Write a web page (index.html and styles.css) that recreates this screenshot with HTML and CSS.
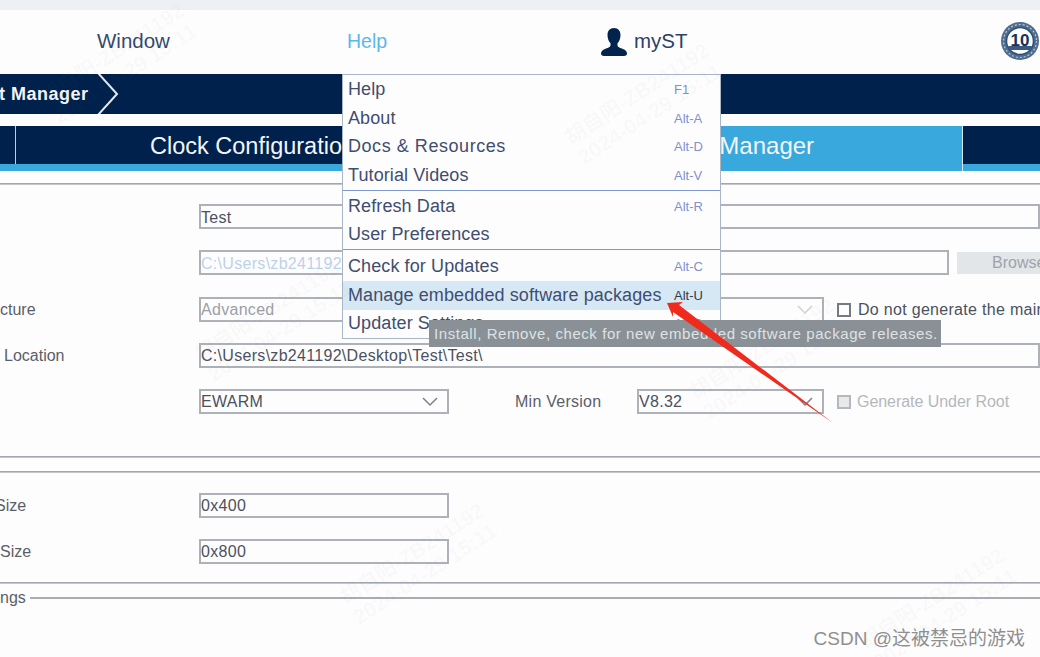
FILE: index.html
```html
<!DOCTYPE html>
<html lang="en">
<head>
<meta charset="utf-8">
<title>STM32CubeMX</title>
<link rel="stylesheet" href="styles.css">
</head>
<body>
<div class="page">
  <div class="top-strip"></div>
  <header class="menubar">
    <span class="menu-window">Window</span>
    <span class="menu-help">Help</span>
    <span class="menu-myst">
      <svg class="user-icon" viewBox="0 0 28 28" width="28" height="28"><path d="M14 0c4.300 0 6.500 3 6.500 7 0 3.500-1.200 6.500-3 8.300v2.200c0 1.600 3 2.400 6 3.700 2.400 1 3.500 2.600 3.500 4.300 0 1.300-1 2.500-3 2.500H4c-2 0-3-1.200-3-2.500 0-1.700 1.100-3.300 3.500-4.300 3-1.300 6-2.100 6-3.700v-2.200c-1.800-1.800-3-4.800-3-8.300 0-4 2.200-7 6.500-7z" fill="#03234f"/></svg>
      <span>myST</span>
    </span>
    <svg class="badge" viewBox="0 0 40 40" width="40" height="40">
      <circle cx="20" cy="20" r="19" fill="#4f6d8f"/>
      <circle cx="20" cy="20" r="16.500" fill="none" stroke="#b9c6d4" stroke-width="1.200" stroke-dasharray="2 2"/>
      <circle cx="20" cy="20" r="13.500" fill="#fdfdfe" stroke="#2f4f75" stroke-width="1.500"/>
      <text x="20" y="25" text-anchor="middle" class="badge-text">10</text>
      <path d="M8 25h24l-2 4H10z" fill="#3c5a7f"/>
    </svg>
  </header>
  <nav class="crumb">
    <span class="crumb-text">t Manager</span>
    <svg class="crumb-chevron" viewBox="0 0 24 40" width="24" height="40"><polyline points="1,-1 20,20 1,41" fill="none" stroke="#e6e9ee" stroke-width="2"/></svg>
  </nav>
  <div class="tabs">
    <div class="tab tab-stub"></div>
    <div class="tab tab-clock">Clock Configuration</div>
    <div class="tab tab-active">Project Manager</div>
    <div class="tab tab-rest"></div>
  </div>
  <div class="rule rule-first"></div>
  <main class="form">
    <div class="row row-a">
      <span class="label"></span>
      <div class="field field-full">Test</div>
    </div>
    <div class="row row-b">
      <span class="label"></span>
      <div class="field field-path muted-blue">C:\Users\zb241192\Desktop\Test</div>
      <div class="browse">Browse</div>
    </div>
    <div class="row row-c">
      <span class="label">cture</span>
      <div class="field field-wide muted">Advanced<svg class="chev chev-light" viewBox="0 0 16 10" width="16" height="10"><polyline points="1,1 8,8 15,1"/></svg></div>
      <span class="check"></span>
      <span class="check-text">Do not generate the main</span>
    </div>
    <div class="row row-d">
      <span class="label label-indent">Location</span>
      <div class="field field-full">C:\Users\zb241192\Desktop\Test\Test\</div>
    </div>
    <div class="row row-e">
      <span class="label"></span>
      <div class="field field-short">EWARM<svg class="chev" viewBox="0 0 16 10" width="16" height="10"><polyline points="1,1 8,8 15,1"/></svg></div>
      <span class="min-label">Min Version</span>
      <div class="field field-min">V8.32<svg class="chev" viewBox="0 0 16 10" width="16" height="10"><polyline points="1,1 8,8 15,1"/></svg></div>
      <span class="check check-off"></span>
      <span class="check-text check-text-off">Generate Under Root</span>
    </div>
    <div class="rule rule-g1"></div>
    <div class="rule rule-g2"></div>
    <div class="row row-f">
      <span class="label label-clip">Size</span>
      <div class="field field-short">0x400</div>
    </div>
    <div class="row row-g">
      <span class="label">Size</span>
      <div class="field field-short">0x800</div>
    </div>
    <div class="rule rule-g3"></div>
    <div class="legend"><span class="legend-text">ngs</span><span class="legend-line"></span></div>
  </main>

  <div class="dropdown">
    <ul class="menu-group">
      <li class="item"><span>Help</span><kbd>F1</kbd></li>
      <li class="item"><span>About</span><kbd>Alt-A</kbd></li>
      <li class="item"><span class="item-wide">Docs &amp; Resources</span><kbd>Alt-D</kbd></li>
      <li class="item"><span>Tutorial Videos</span><kbd>Alt-V</kbd></li>
    </ul>
    <ul class="menu-group">
      <li class="item"><span>Refresh Data</span><kbd>Alt-R</kbd></li>
      <li class="item"><span>User Preferences</span></li>
    </ul>
    <ul class="menu-group">
      <li class="item"><span>Check for Updates</span><kbd>Alt-C</kbd></li>
      <li class="item item-hover"><span>Manage embedded software packages</span><kbd>Alt-U</kbd></li>
      <li class="item"><span>Updater Settings</span><kbd>Alt-S</kbd></li>
    </ul>
  </div>
  <div class="tooltip">Install, Remove, check for new embedded software package releases.</div>

  <div class="wm wm-1">胡自阳-ZB241192<br>2024-04-29 15:11</div>
  <div class="wm wm-2">胡自阳-ZB241192<br>2024-04-29 15:11</div>
  <div class="wm wm-3">胡自阳-ZB241192<br>2024-04-29 15:11</div>
  <div class="wm wm-4">胡自阳-ZB241192<br>2024-04-29 15:11</div>
  <div class="wm wm-5">胡自阳-ZB241192<br>2024-04-29 15:11</div>
  <div class="wm wm-6">胡自阳-ZB241192<br>2024-04-29 15:11</div>

  <svg class="arrow" viewBox="0 0 1040 657" width="1040" height="657"><polygon points="667,303 683,302 679,305 833,423 673,312 673,317" fill="#f02a1c"/></svg>
  <div class="csdn">CSDN @这被禁忌的游戏</div>
</div>
</body>
</html>
```
FILE: styles.css
```css
* { box-sizing: border-box; }
html, body { margin: 0; padding: 0; }
body { background: #fefcfe; font-family: "Liberation Sans", Arial, "Noto Sans CJK SC", sans-serif; color: #4a525e; }
.page { position: relative; width: 1040px; height: 657px; overflow: hidden; background: #fefdfe; }
.top-strip { height: 10px; background: #edf1f5; }

.menubar { height: 64px; display: flex; align-items: center; font-size: 20.5px; color: #33496f; position: relative; }
.menu-window { margin-left: 97px; width: 250px; padding-bottom: 2px; }
.menu-help { width: 253px; color: #5cb8e8; padding-bottom: 2px; font-size: 19.5px; }
.menu-myst { display: flex; align-items: center; gap: 6px; color: #2c4168; width: 400px; }
.menu-myst span { padding-bottom: 2px; }
.user-icon { display: block; }
.badge { display: block; flex: none; margin-bottom: 2px; }
.badge-text { font: bold 17px "Liberation Sans", sans-serif; fill: #16315a; }

.crumb { height: 40px; background: #00214c; display: flex; align-items: center; }
.crumb-text { color: #f2f4f7; font-weight: bold; font-size: 18px; letter-spacing: 0.5px; margin-left: -1px; width: 98px; white-space: nowrap; }
.crumb-chevron { display: block; flex: none; }

.tabs { margin-top: 12px; height: 45px; display: flex; background: #38a8dd; font-size: 23.5px; color: #f4f6f8; }
.tab { height: 38px; display: flex; align-items: center; white-space: nowrap; background: #00214c; }
.tab-stub { width: 16px; border-right: 1px solid #c5ccd4; }
.tab-clock { width: 527px; padding-left: 134px; padding-top: 2px; }
.tab-active { width: 420px; height: 45px; background: #38a8dd; padding-left: 95px; padding-bottom: 5px; border-right: 1px solid #d9e6ef; font-size: 24px; }
.tab-rest { flex: 1; }

.rule { background: #a3a8ae; border-bottom: 1px solid #c4c8cc; height: 2px; }
.rule-first { margin-top: 12px; }
.form { padding-top: 19px; font-size: 16px; }
.row { display: flex; align-items: center; height: 25px; }
.row-b, .row-d, .row-e, .row-g { margin-top: 21px; }
.row-c { margin-top: 22px; }
.label { width: 199px; flex: none; color: #5a5f68; white-space: nowrap; }
.label-indent { padding-left: 4px; }
.label-clip { margin-left: -5px; width: 204px; }
.field { height: 25px; border: 2px solid #adb2b8; background: #fefdfe; display: flex; align-items: center; justify-content: space-between; padding: 0 9px 0 0; color: #4a5260; white-space: nowrap; overflow: hidden; flex: none; letter-spacing: 0.3px; }
.row-a .field, .row-b .field { padding-top: 2px; }
.field-full { width: 841px; }
.field-path { width: 750px; }
.field-wide { width: 625px; }
.field-short { width: 250px; }
.field-min { width: 187px; }
.muted { color: #9aa0a6; }
.muted-blue { color: #bcd2ea; }
.browse { width: 83px; height: 22px; margin-left: 8px; background: #e3e6e8; color: #9ea3a8; display: flex; align-items: center; padding-left: 35px; padding-top: 1px; white-space: nowrap; flex: none; }
.chev { display: block; flex: none; }
.chev polyline { fill: none; stroke: #7c828a; stroke-width: 1.5; }
.chev-light polyline { stroke: #cdd0d4; }
.check { width: 14px; height: 14px; margin-left: 13px; border: 2px solid #767b82; flex: none; }
.check-off { background: #e7e9eb; border-color: #b5b9be; }
.check-text { margin-left: 7px; white-space: nowrap; letter-spacing: 0.3px; color: #4a5260; }
.check-text-off { color: #b4b8bc; letter-spacing: -0.05px; margin-left: 6px; }
.min-label { width: 122px; margin-left: 66px; color: #5a5f68; flex: none; letter-spacing: 0.25px; }
.rule-g1 { margin-top: 42px; }
.rule-g2 { margin-top: 13px; }
.row-f { margin-top: 20px; }
.rule-g3 { margin-top: 18px; }
.legend { display: flex; align-items: center; height: 18px; margin-top: 5px; }
.legend-text { color: #5a5f68; width: 30px; }
.legend-line { flex: 1; height: 2px; background: #a9adb2; }

.dropdown { position: absolute; left: 342px; top: 74px; width: 379px; height: 265px; background: #fefdfe; border: 1px solid #a9b6c8; font-size: 18px; color: #3f4e70; letter-spacing: 0.1px; }
.menu-group { list-style: none; margin: 0; padding: 0; border-bottom: 1px solid #7f9ad0; }
.menu-group:nth-child(2) { padding-top: 1px; }
.menu-group:last-child { border-bottom: 0; padding-top: 2px; }
.item { height: 28.700px; display: flex; align-items: center; justify-content: space-between; padding: 0 16px 0 5px; white-space: nowrap; }
.item-wide { letter-spacing: 0.55px; }
.item kbd { font-family: "Liberation Sans", sans-serif; font-size: 13px; color: #7f90cc; width: 30px; letter-spacing: 0; }
.item-hover { background: #d7e8f5; }
.item-hover kbd { color: #2c3a50; }
.tooltip { position: absolute; left: 429px; top: 320px; width: 512px; height: 27px; background: #899197; color: #dfe2e4; font-size: 15px; letter-spacing: 0.57px; display: flex; align-items: center; padding-left: 5px; white-space: nowrap; }

.wm { position: absolute; font-size: 21px; line-height: 24px; color: rgba(110,110,120,0.04); font-weight: bold; transform: rotate(-33deg); white-space: nowrap; text-align: center; }
.wm-1 { left: 35px; top: 40px; }
.wm-2 { left: 560px; top: 80px; }
.wm-3 { left: 190px; top: 297px; }
.wm-4 { left: 685px; top: 335px; }
.wm-5 { left: 335px; top: 540px; }
.wm-6 { left: 855px; top: 585px; }

.arrow { position: absolute; left: 0; top: 0; display: block; pointer-events: none; }
.csdn { position: absolute; right: 15px; top: 623px; font-size: 19px; color: #8f8f8f; white-space: nowrap; }
```
